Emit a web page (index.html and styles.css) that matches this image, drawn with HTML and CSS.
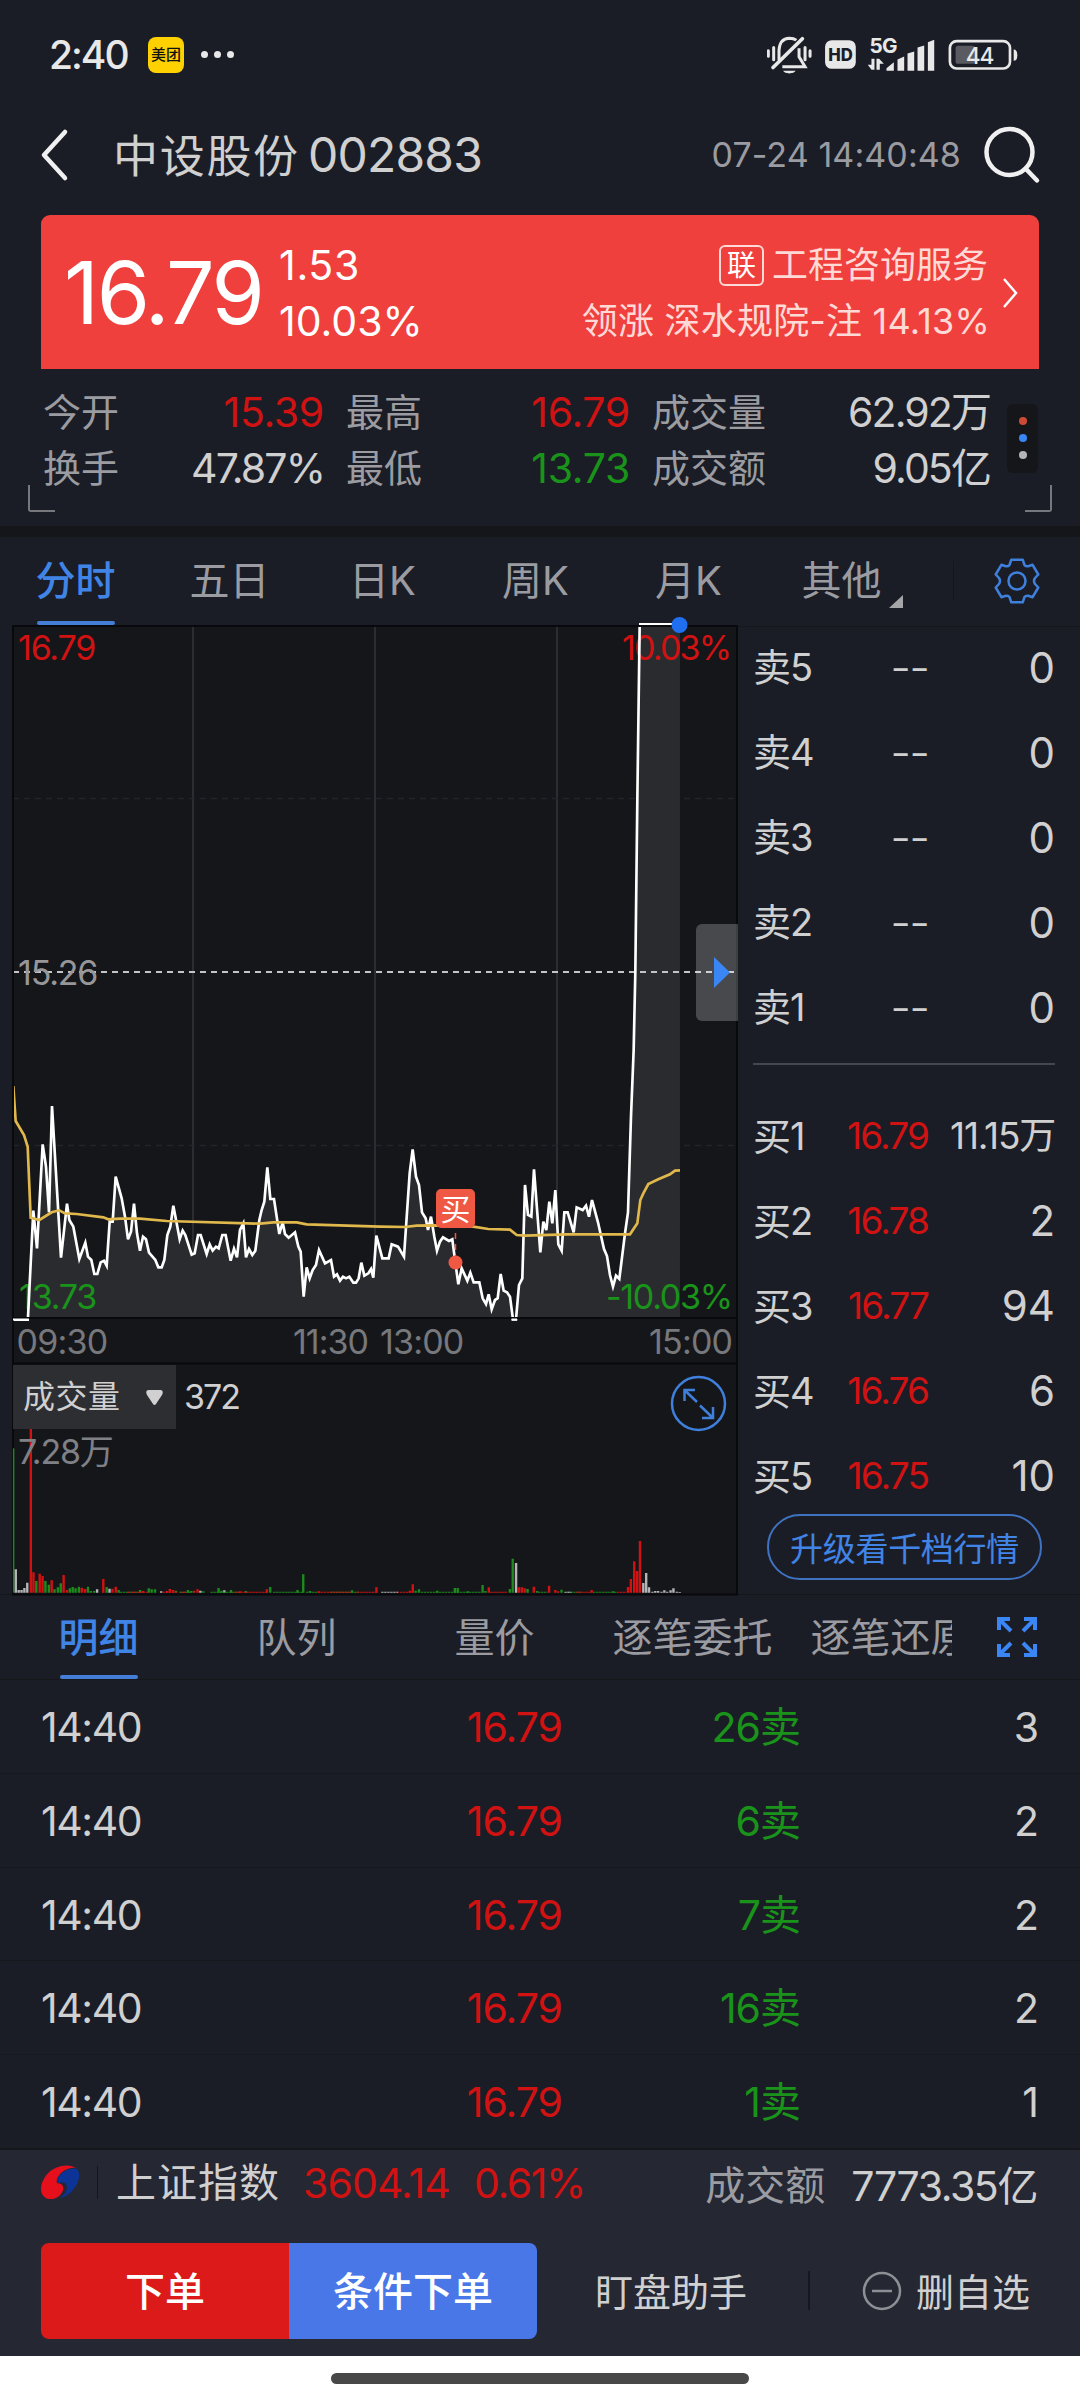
FILE: index.html
```html
<!DOCTYPE html>
<html lang="zh-CN">
<head>
  <meta charset="UTF-8">
  <meta name="viewport" content="width=device-width, initial-scale=1.0">
  <title>中设股份 002883</title>
  <link rel="stylesheet" href="styles.css">
</head>
<body>
  <div class="status-bar">
    <span class="clock">2:40</span>
    <span class="app-badge">美团</span>
    <span class="more"><i></i><i></i><i></i></span>
    <svg class="status-icons" viewBox="80 40 755 125">
      <!-- muted bell -->
      <g fill="none" stroke="#e8e8e8" stroke-width="9">
        <path d="M84 90v16M100 80v37M194 80v37M209 90v16" stroke-linecap="round"/>
        <path d="M116 118V88Q118 53 147 52Q160 52 168 58M176 82V108L194 138H126"/>
        <path d="M98 140L186 54" stroke-width="11" stroke-linecap="round"/>
        <path d="M128 150a20 11 0 0 0 38 0z" fill="#e8e8e8" stroke="none"/>
      </g>
      <rect x="254" y="58" width="92" height="86" rx="20" fill="#e8e8e8"/>
      <text class="hd" x="300" y="119" text-anchor="middle">HD</text>
      <text class="g5" x="387" y="98">5G</text>
      <g fill="#e8e8e8">
        <path d="M393 114h9v33h-9l-11-15h11zM408 147v-33h8l14 15h-12v18z"/>
        <path d="M438 150v-8l22-18v26zM471 150v-34l20-9v43zM501 150V98l20-6v58zM531 150V80l20-6v76zM562 150V64l19-7v93z"/>
        <path d="M819 86q11 0 11 17t-11 17z"/>
      </g>
      <rect x="628" y="61" width="180" height="82" rx="20" fill="none" stroke="#e8e8e8" stroke-width="8"/>
      <rect x="645" y="75" width="58" height="54" rx="8" fill="#5a5b60"/>
      <text class="battery" x="717" y="129" text-anchor="middle">44</text>
    </svg>
  </div>

  <div class="header">
    <svg class="back" width="32" height="56" viewBox="0 0 32 56"><path d="M27 5L6 28L27 51"/></svg>
    <span class="name">中设股份</span>
    <span class="code">002883</span>
    <span class="time">07-24 14:40:48</span>
    <svg class="search" width="58" height="60" viewBox="0 0 58 60"><circle cx="26.5" cy="27" r="23"/><path d="M42.5 43.5L54 55.5"/></svg>
  </div>

  <div class="banner">
    <div class="price">16.79</div>
    <div class="change">
      <div class="diff">1.53</div>
      <div>10.03%</div>
    </div>
    <div class="sector">
      <div class="sector-name"><span class="tag">联</span>工程咨询服务</div>
      <div class="leader">领涨 深水规院-注 14.13%</div>
    </div>
    <svg class="arrow" width="18" height="32" viewBox="0 0 18 32"><path d="M3 2L15 16L3 30"/></svg>
  </div>

  <div class="stats">
    <div class="stats-grid">
      <div><label>今开</label><b class="red">15.39</b></div>
      <div><label>最高</label><b class="red">16.79</b></div>
      <div><label>成交量</label><b>62.92万</b></div>
      <div><label>换手</label><b>47.87%</b></div>
      <div><label>最低</label><b class="green">13.73</b></div>
      <div><label>成交额</label><b>9.05亿</b></div>
    </div>
    <div class="pager"><i></i><i></i><i></i></div>
  </div>

  <div class="tabs">
    <div class="tab active"><span>分时</span></div>
    <div class="tab"><span>五日</span></div>
    <div class="tab"><span>日K</span></div>
    <div class="tab"><span>周K</span></div>
    <div class="tab"><span>月K</span></div>
    <div class="tab other"><span>其他</span></div>
    <div class="tab-tool">
      <svg width="50" height="50" viewBox="-25 -25 50 50">
        <path d="M-5.7-21.3H5.7L7.5-16Q9-14 12-15L15.6-16.2L21.3-6.5L18-3Q16 0 18 3L21.3 6.5L15.6 16.2L12 15Q9 14 7.5 16L5.7 21.3H-5.7L-7.5 16Q-9 14-12 15L-15.6 16.2L-21.3 6.5L-18 3Q-16 0-18-3L-21.3-6.5L-15.6-16.2L-12-15Q-9-14-7.5-16Z"/>
        <circle r="8.5"/>
      </svg>
    </div>
  </div>

  <div class="main">
    <svg class="chart" viewBox="12 626 726 969">
      <rect x="12" y="626" width="726" height="969" fill="#15161a"/>
      <path d="M193 626V1317M375 626V1317M557 626V1317" stroke="#2c2d33" stroke-width="2"/>
      <path d="M13 798.5H738M13 1145.5H738" stroke="#23242a" stroke-width="1.5" stroke-dasharray="6 5"/>

      <!-- intraday price, area + line -->
      <g transform="translate(0 1050) scale(.33333)">
        <path fill="#2a2b2f" d="M84 801L100 482 111 595 128 283 138 350 147 487 156 168 168 370 183 623 201 461 208 510 220 530 238 627 256 578 264 620 274 630 283 672 292 672 302 637 312 632 320 647 329 515 338 515 347 380 365 445 375 500 384 568 393 545 402 461 411 550 420 602 429 560 438 568 447 608 466 630 475 652 485 652 493 630 502 555 511 530 520 467 530 520 539 568 548 542 556 555 575 614 584 610 594 555 602 555 620 612 629 583 638 602 648 590 656 595 667 555 677 555 692 632 702 596 711 622 720 540 730 520 738 622 747 597 757 615 766 602 778 510 785 480 793 455 802 352 811 447 822 447 838 552 848 517 855 552 866 563 885 547 895 590 902 605 911 740 920 652 929 685 938 660 948 645 957 600 975 640 993 630 1002 680 1011 673 1020 692 1029 680 1038 685 1048 680 1060 698 1068 698 1076 685 1084 638 1093 677 1105 670 1113 657 1120 683 1129 557 1147 625 1166 625 1175 583 1194 590 1212 620 1229 370 1238 298 1248 380 1257 405 1266 487 1277 505 1284 540 1293 500 1303 560 1311 602 1320 575 1329 562 1347 573 1357 568 1366 637 1375 703 1385 655 1402 692 1411 668 1421 697 1438 697 1448 745 1458 762 1466 733 1475 778 1485 750 1493 745 1502 672 1511 722 1521 727 1530 740 1539 801 1548 801 1557 705 1567 685 1575 405 1584 495 1594 500 1602 358 1621 607 1630 515 1639 540 1648 455 1657 520 1666 420 1675 583 1685 602 1693 487 1703 487 1721 547 1730 472 1748 480 1758 467 1767 500 1776 450 1794 517 1812 597 1821 618 1830 675 1839 710 1848 677 1858 687 1875 550 1884 487 1893 200 1901 0 1906-234 1912-750 1919-1272H2040V801Z"/>
      </g>

      <path d="M13 972H738" stroke="#c4c4c6" stroke-width="1.8" stroke-dasharray="6 5"/>

      <g class="axis-text">
        <text class="t-red" x="18" y="660" letter-spacing="-1.2">16.79</text>
        <text class="t-red" x="622" y="660" letter-spacing="-1.8">10.03%</text>
        <text x="18" y="984.5" letter-spacing="-1.2">15.26</text>
        <text class="t-green" x="19" y="1309" letter-spacing="-1.2">13.73</text>
        <text class="t-green" x="606" y="1309" letter-spacing="-1.3">-10.03%</text>
        <text class="t-dim" x="16.5" y="1353.5" letter-spacing="-.8">09:30</text>
        <text class="t-dim" x="293" y="1353.5" letter-spacing="-1">11:30</text>
        <text class="t-dim" x="380" y="1353.5" letter-spacing="-.8">13:00</text>
        <text class="t-dim" x="649" y="1353.5" letter-spacing="-.8">15:00</text>
      </g>

      <g transform="translate(0 1050) scale(.33333)" fill="none" stroke-width="8">
        <path stroke="#fff" d="M38 809H87M84 801L100 482 111 595 128 283 138 350 147 487 156 168 168 370 183 623 201 461 208 510 220 530 238 627 256 578 264 620 274 630 283 672 292 672 302 637 312 632 320 647 329 515 338 515 347 380 365 445 375 500 384 568 393 545 402 461 411 550 420 602 429 560 438 568 447 608 466 630 475 652 485 652 493 630 502 555 511 530 520 467 530 520 539 568 548 542 556 555 575 614 584 610 594 555 602 555 620 612 629 583 638 602 648 590 656 595 667 555 677 555 692 632 702 596 711 622 720 540 730 520 738 622 747 597 757 615 766 602 778 510 785 480 793 455 802 352 811 447 822 447 838 552 848 517 855 552 866 563 885 547 895 590 902 605 911 740 920 652 929 685 938 660 948 645 957 600 975 640 993 630 1002 680 1011 673 1020 692 1029 680 1038 685 1048 680 1060 698 1068 698 1076 685 1084 638 1093 677 1105 670 1113 657 1120 683 1129 557 1147 625 1166 625 1175 583 1194 590 1212 620 1229 370 1238 298 1248 380 1257 405 1266 487 1277 505 1284 540 1293 500 1303 560 1311 602 1320 575 1329 562 1347 573 1357 568 1366 637 1375 703 1385 655 1402 692 1411 668 1421 697 1438 697 1448 745 1458 762 1466 733 1475 778 1485 750 1493 745 1502 672 1511 722 1521 727 1530 740 1539 808 1548 808 1557 705 1567 685 1575 405 1584 495 1594 500 1602 358 1621 607 1630 515 1639 540 1648 455 1657 520 1666 420 1675 583 1685 602 1693 487 1703 487 1721 547 1730 472 1748 480 1758 467 1767 500 1776 450 1794 517 1812 597 1821 618 1830 675 1839 710 1848 677 1858 687 1875 550 1884 487 1893 200 1901 0 1906-234 1912-750 1919-1272"/>
        <path stroke="#e0b84c" d="M40 108L47 213 72 255 83 290 92 503 118 510 155 487 178 481 195 490 230 492 310 502 325 508 360 506 420 506 500 513 780 521 820 517 890 517 920 523 1140 530 1215 531 1250 527 1300 526 1420 530 1465 537 1530 539 1550 555 1575 557 1700 553 1890 553 1912 520 1921 450 1930 430 1945 402 1975 388 2010 373 2025 362 2040 361"/>
      </g>

      <path d="M13 1594.5V626H737V1594.5Z" fill="none" stroke="#08090c" stroke-width="2"/>
      <path d="M12 1318H738M12 1363.5H738" stroke="#08090c" stroke-width="2"/>
      <path d="M639 624H676M13 1319.5H29M511.5 1319.5H517" stroke="#fff" stroke-width="2"/>
      <circle cx="679.5" cy="625" r="8" fill="#1f6ff0"/>

      <path d="M455.5 1233V1256" stroke="#ef5842" stroke-width="1.5" stroke-dasharray="6 5"/>
      <circle cx="455.5" cy="1262.5" r="7" fill="#ef5842"/>
      <rect x="436" y="1189" width="39" height="39" rx="5" fill="#ef5842"/>
      <text class="flag" x="455.5" y="1220" text-anchor="middle">买</text>

      <path d="M738 924H702a6 6 0 0 0-6 6v85a6 6 0 0 0 6 6h36z" fill="#fff" fill-opacity=".22"/>
      <path d="M714 957L730 972.5L714 988Z" fill="#3b86f5"/>

      <!-- volume bars -->
      <g transform="translate(0 1360) scale(.4783 .33333)" stroke-width="5" fill="none">
        <path stroke="#1d8a1d" d="M76 698V663M95 698V663M102 698V674M114 698V688M121 698V682M127 698V670M146 698V685M152 698V681M158 698V685M165 698V680M184 698V680M190 698V693M197 698V693M223 698V681M248 698V690M293 698V690M311 698V685M317 698V688M324 698V688M368 698V692M393 698V690M400 698V693M425 698V694M457 698V684M463 698V692M483 698V690M514 698V693M565 698V681M622 698V690M634 698V643M648 698V693M736 698V691M869 698V692M876 698V688M914 698V692M951 698V684M957 698V684M978 698V694M1009 698V675M1015 698V693M1066 698V687M1072 698V596M1103 698V687M1123 698V693M1174 698V689M1282 698V694"/>
        <path stroke="#1d8a1d" stroke-width="3" d="M28.5 698V265"/>
        <path stroke="#d01212" d="M64.5 698V200M70 698V637M83 698V641M89 698V648M108 698V661M133 698V645M140 698V690M171 698V683M178 698V687M216 698V657M235 698V686M242 698V680M299 698V693M349 698V693M355 698V687M362 698V690M406 698V692M413 698V688M502 698V694M558 698V688M667 698V694M787 698V682M857 698V692M863 698V673M1022 698V682M1085 698V682M1091 698V682M1097 698V685M1116 698V680M1148 698V677M1161 698V690M1167 698V694M1237 698V690M1313 698V681M1319 698V657M1326 698V604M1332 698V633M1338 698V543"/>
        <path stroke="#b5b5b7" d="M33 698V628M39 698V690M45 698V690M51 698V684M57 698V668M203 698V688M229 698V686M337 698V694M419 698V692M469 698V691M1079 698V609M1345 698V669M1351 698V639M1357 698V682M1364 698V695M1370 698V693M1376 698V693M1383 698V695M1389 698V691M1395 698V695M1402 698V691M1408 698V685M1415 698V695M1421 698V696"/>
        <g stroke-width="3" stroke-dasharray="5 1.3">
          <path stroke="#1d8a1d" d="M250 697H290M375 697H400M440 697H500M571 697H635M640 697H665M690 697H750M880 697H1005M1125 697H1145M1186 697H1215M1240 697H1290"/>
          <path stroke="#d01212" d="M267 697H310M340 697H370M378 697H390M490 697H560M665 697H735M745 697H790M830 697H860M1025 697H1060M1205 697H1235M1290 697H1310"/>
          <path stroke="#b5b5b7" d="M797 697H832M1180 697H1195"/>
        </g>
      </g>
      <rect x="13" y="1365" width="163" height="64" fill="#2d2e32"/>
      <text class="vol-name" x="23" y="1408" letter-spacing=".5">成交量</text>
      <path d="M148 1390h13q3 1 1 5l-6 9q-1.5 2-3 0l-6-9q-2-4 1-5z" fill="#d0d0d0"/>
      <text class="vol-value" x="184" y="1409" letter-spacing="-2">372</text>
      <text class="vol-max" x="18" y="1464" letter-spacing="-1.2">7.28万</text>
      <g fill="none" stroke="#3f80dc" stroke-width="2.5">
        <circle cx="698.5" cy="1403.5" r="26.5"/>
        <path d="M684.5 1401V1390H695M685 1390.5L697 1402M700 1405.5L712.5 1417.5M713 1407V1418H702"/>
      </g>
    </svg>

    <div class="book">
      <div class="asks">
        <div class="level"><span>卖5</span><em>--</em><b>0</b></div>
        <div class="level"><span>卖4</span><em>--</em><b>0</b></div>
        <div class="level"><span>卖3</span><em>--</em><b>0</b></div>
        <div class="level"><span>卖2</span><em>--</em><b>0</b></div>
        <div class="level"><span>卖1</span><em>--</em><b>0</b></div>
      </div>
      <div class="bids">
        <div class="level"><span>买1</span><em class="red">16.79</em><b class="small">11.15万</b></div>
        <div class="level"><span>买2</span><em class="red">16.78</em><b>2</b></div>
        <div class="level"><span>买3</span><em class="red">16.77</em><b>94</b></div>
        <div class="level"><span>买4</span><em class="red">16.76</em><b>6</b></div>
        <div class="level"><span>买5</span><em class="red">16.75</em><b>10</b></div>
      </div>
      <button class="upgrade">升级看千档行情</button>
    </div>
  </div>

  <div class="detail-tabs">
    <div class="detail-scroll">
      <div class="tab active"><span>明细</span></div>
      <div class="tab"><span>队列</span></div>
      <div class="tab"><span>量价</span></div>
      <div class="tab"><span>逐笔委托</span></div>
      <div class="tab"><span>逐笔还原</span></div>
    </div>
    <svg class="expand" width="40" height="40" viewBox="0 0 40 40">
      <path d="M2 13V2H13M3 3L14 14M27 2H38V13M37 3L26 14M2 27V38H13M3 37L14 26M38 27V38H27M37 37L26 26"/>
    </svg>
  </div>

  <div class="trades">
    <div class="trade"><span>14:40</span><span class="red">16.79</span><span class="green">26卖</span><span>3</span></div>
    <div class="trade"><span>14:40</span><span class="red">16.79</span><span class="green">6卖</span><span>2</span></div>
    <div class="trade"><span>14:40</span><span class="red">16.79</span><span class="green">7卖</span><span>2</span></div>
    <div class="trade"><span>14:40</span><span class="red">16.79</span><span class="green">16卖</span><span>2</span></div>
    <div class="trade"><span>14:40</span><span class="red">16.79</span><span class="green">1卖</span><span>1</span></div>
  </div>

  <div class="footer">
    <div class="index-row">
      <svg class="logo" width="40" height="38" viewBox="0 0 120 114">
        <path fill="#e60f1c" d="M108 12C90-2 45 2 20 32C-2 58-4 94 22 104C46 110 68 92 70 74C70 62 62 58 52 58C46 50 54 32 72 20C84 13 98 10 108 12Z"/>
        <path fill="#0c3396" d="M110 14C122 24 120 52 102 74C88 92 70 101 58 102C76 92 86 76 78 60C72 52 60 58 52 56C48 44 60 28 76 20C88 14 100 12 110 14Z"/>
      </svg>
      <span class="index-name">上证指数</span>
      <span class="index-value red">3604.14</span>
      <span class="index-pct red">0.61%</span>
      <span class="amount-label">成交额</span>
      <span class="amount">7773.35亿</span>
    </div>
    <div class="action-row">
      <button class="order">下单</button>
      <button class="order cond">条件下单</button>
      <span class="helper">盯盘助手</span>
      <span class="remove">
        <svg width="40" height="40" viewBox="0 0 40 40"><circle cx="20" cy="20" r="18"/><path d="M10 20H30"/></svg>
        <span>删自选</span>
      </span>
    </div>
  </div>
  <div class="home-bar"><i></i></div>
</body>
</html>
```
FILE: styles.css
```css
* {
  box-sizing: border-box;
}

body {
  margin: 0;
  width: 1080px;
  height: 2400px;
  overflow: hidden;
  background-color: #1b1d26;
  color: #d0d0d0;
  font-family: Inter, "Noto Sans CJK SC", sans-serif;
  font-size: 41px;
  white-space: nowrap;
}

b, em, i {
  font-weight: 400;
  font-style: normal;
}

button {
  font-family: inherit;
  border: none;
  padding: 0;
}

.red { color: #d01212; }
.green { color: #1a931a; }

/* status bar */
.status-bar {
  display: flex;
  align-items: center;
  height: 109px;
  padding: 0 61px 0 49px;
}

.clock {
  width: 99px;
  font-size: 39px;
  font-weight: 500;
  letter-spacing: -2px;
  color: #e8e8e8;
}

.app-badge {
  width: 36px;
  height: 36px;
  line-height: 35px;
  border-radius: 8px;
  background-color: #ffd100;
  color: #111;
  font-size: 15px;
  font-weight: 500;
  text-align: center;
}

.more {
  display: flex;
  gap: 6px;
  margin-left: 17px;
}

.more i {
  width: 7px;
  height: 7px;
  border-radius: 50%;
  background-color: #e8e8e8;
}

.status-icons {
  width: 252px;
  height: 42px;
  margin-left: auto;
  font-weight: 700;
}

.hd { font-size: 50px; font-weight: 800; fill: #1b1d26; }
.g5 { font-size: 62px; font-weight: 700; letter-spacing: -2px; fill: #e8e8e8; }
.battery { font-size: 68px; font-weight: 500; letter-spacing: -3px; fill: #e8e8e8; }

/* header */
.header {
  display: flex;
  align-items: center;
  height: 91px;
  padding: 0 39px 0 38px;
}

.back, .search {
  fill: none;
  stroke: #f0f0f0;
  stroke-width: 4.5;
  stroke-linecap: round;
  stroke-linejoin: round;
}

.search {
  margin-left: 22px;
}

.name {
  margin-left: 43px;
  width: 195px;
  padding-bottom: 2px;
  font-size: 45px;
  letter-spacing: 1.7px;
}

.code {
  font-size: 48px;
  letter-spacing: -0.8px;
}

.time {
  margin-left: auto;
  font-size: 34px;
  letter-spacing: 0.1px;
  color: #9b9ca1;
}

/* price banner */
.banner {
  display: flex;
  align-items: center;
  height: 154px;
  margin: 15px 41px 0 41px;
  padding: 2px 20px 0 23px;
  border-radius: 9px 9px 0 0;
  background-color: #ef403e;
  color: #fff;
}

.price {
  width: 215px;
  font-size: 86px;
  font-weight: 400;
  letter-spacing: -2.3px;
  line-height: 100px;
}

.change {
  line-height: 56px;
}

.diff {
  letter-spacing: 0.7px;
}

.sector {
  margin-left: auto;
  line-height: 56px;
  font-size: 36px;
  text-align: right;
  color: #ffd9d6;
}

.sector-name {
  display: flex;
  align-items: center;
  justify-content: flex-end;
  height: 55px;
  margin-right: 2px;
}

.leader {
  letter-spacing: 0.2px;
}

.tag {
  width: 45px;
  height: 41px;
  line-height: 37px;
  margin-right: 8px;
  border: 2px solid #ffd9d6;
  border-radius: 6px;
  color: #fff;
  font-size: 29px;
  text-align: center;
}

.arrow {
  margin-left: 11px;
  fill: none;
  stroke: #fff;
  stroke-width: 2.5;
}

/* today's figures */
.stats {
  position: relative;
  display: flex;
  align-items: center;
  height: 157px;
  padding: 0 42px 16px 43px;
}

.stats-grid {
  display: grid;
  grid-template-columns: 281px 284px 338px;
  column-gap: 22px;
  line-height: 56px;
}

.stats-grid div {
  display: flex;
  justify-content: space-between;
}

.stats label {
  font-size: 38px;
  color: #9b9ca1;
}

.stats b {
  letter-spacing: -1.9px;
}

.stats .red, .stats .green {
  letter-spacing: -0.3px;
}

.stats::before, .stats::after {
  content: "";
  position: absolute;
  bottom: 14px;
  left: 28px;
  width: 25px;
  height: 25px;
  border: solid #77787d;
  border-width: 0 0 2px 2px;
  border-radius: 0 0 0 3px;
}

.stats::after {
  left: auto;
  right: 28px;
  border-width: 0 2px 2px 0;
  border-radius: 0 0 3px 0;
}

.pager {
  display: flex;
  flex-direction: column;
  align-items: center;
  justify-content: center;
  gap: 9px;
  width: 31px;
  height: 69px;
  margin: 0 0 3px auto;
  border-radius: 6px;
  background-color: #15161a;
}

.pager i {
  width: 8px;
  height: 8px;
  border-radius: 50%;
  background-color: #b5b5b7;
}

.pager i:nth-child(1) { background-color: #cf4a35; }
.pager i:nth-child(2) { background-color: #3b86f5; }

/* tabs */
.tabs {
  display: flex;
  height: 100px;
  border-top: 11px solid #15161a;
}

.tab {
  display: flex;
  justify-content: center;
  flex: 0 0 153px;
  height: 100%;
  line-height: 87px;
  font-size: 40px;
  color: #9b9ca1;
}

.tab.active span {
  position: relative;
  height: 88px;
  font-weight: 500;
  color: #4084e6;
}

.tab.active span::after {
  content: "";
  position: absolute;
  left: 1px;
  right: 1px;
  bottom: 0;
  height: 4px;
  border-radius: 2px;
  background-color: #447ed6;
}

.tabs .active {
  padding-right: 2px;
}

.other {
  position: relative;
}

.other::after {
  content: "";
  position: absolute;
  left: 124px;
  top: 58px;
  border: solid transparent;
  border-width: 0 0 13px 14px;
  border-bottom-color: #a5a5a8;
}

.tab-tool {
  display: flex;
  align-items: center;
  justify-content: center;
  flex: 1;
  height: 40px;
  margin: 24px 0 0 35px;
  border-left: 1px solid #15161a;
}

.tab-tool svg {
  fill: none;
  stroke: #3f80dc;
  stroke-width: 2.5;
  stroke-linejoin: round;
}

/* chart + order book */
.main {
  display: flex;
  height: 969px;
  padding-left: 12px;
  border-bottom: 1px solid #15161a;
}

.chart {
  flex: none;
  width: 726px;
  height: 969px;
  overflow: visible;
}

.axis-text {
  font-size: 34px;
  fill: #97979a;
}

.t-red { fill: #d01212; }
.t-green { fill: #1a931a; }
.t-dim { fill: #77787c; }
.flag { font-size: 30px; fill: #fff; }
.vol-name { font-size: 32px; fill: #d0d0d0; }
.vol-value { font-size: 34px; fill: #d0d0d0; }
.vol-max { font-size: 34px; fill: #808186; }

.book {
  flex: 1;
  padding: 0 25px 0 15px;
  border-top: 1px solid #15161a;
}

.asks {
  height: 438px;
  border-bottom: 2px solid #45474f;
}

.bids {
  padding-top: 30px;
}

.level {
  display: grid;
  grid-template-columns: 72px 1fr 127px;
  height: 85px;
  line-height: 82px;
}

.level span {
  font-size: 38px;
  letter-spacing: -1px;
}

.level em {
  font-size: 37px;
  letter-spacing: -1.9px;
  text-align: right;
}

.asks .level {
  line-height: 81px;
}

.asks em {
  font-size: 46px;
  font-weight: 300;
  letter-spacing: -2px;
}

.level b {
  font-size: 42px;
  text-align: right;
}

.level b.small {
  font-size: 37px;
  letter-spacing: -1.2px;
}

.upgrade {
  display: block;
  width: 275px;
  height: 66px;
  margin: -6px auto 0 14px;
  border: 2px solid #3f72c0;
  border-radius: 33px;
  background: none;
  color: #4084e6;
  font-size: 33px;
  letter-spacing: -0.3px;
}

/* trade details */
.detail-tabs {
  display: flex;
  align-items: center;
  height: 85px;
  border-bottom: 1px solid #15161a;
}

.detail-scroll {
  display: flex;
  width: 952px;
  height: 84px;
  overflow: hidden;
}

.detail-scroll .tab {
  flex-basis: 198px;
  padding-right: 1px;
  line-height: 86px;
}

.detail-scroll .active span {
  height: 84px;
}

.expand {
  margin-left: 45px;
  fill: none;
  stroke: #3b86f5;
  stroke-width: 4;
}

.trade {
  display: grid;
  grid-template-columns: 200px 321px 238px 1fr;
  height: 93.8px;
  padding: 0 42px 0 41px;
  line-height: 94px;
  border-bottom: 1px solid #17181d;
  letter-spacing: -1px;
  text-align: right;
}

.trade span:first-child {
  text-align: left;
  letter-spacing: -1.4px;
}

/* bottom panel */
.footer {
  height: 207px;
  background-color: #252733;
  border-top: 1px solid #15161a;
}

.index-row {
  display: flex;
  align-items: center;
  height: 66px;
  padding: 0 43px 0 40px;
}

.index-name {
  margin-left: 17px;
  padding-left: 18px;
  border-left: 1px solid #15161a;
  width: 206px;
  line-height: 33px;
  font-size: 40px;
  letter-spacing: 1px;
}

.index-value {
  width: 171px;
  letter-spacing: -0.9px;
}

.index-pct {
  letter-spacing: -1.4px;
}

.amount-label {
  margin-left: auto;
  font-size: 40px;
  color: #9b9ca1;
}

.amount {
  margin-left: 26px;
  letter-spacing: -1.4px;
}

.action-row {
  display: flex;
  align-items: center;
  height: 96px;
  margin-top: 27px;
  padding: 0 50px 0 41px;
  font-size: 38px;
}

.order {
  width: 248px;
  height: 96px;
  padding-bottom: 3px;
  border-radius: 8px 0 0 8px;
  background-color: #dc1a1a;
  color: #fff;
  font-size: 40px;
  font-weight: 500;
}

.cond {
  border-radius: 0 8px 8px 0;
  background-color: #4a77e8;
}

.helper {
  margin-left: 58px;
  padding-bottom: 3px;
}

.remove {
  display: flex;
  align-items: center;
  gap: 14px;
  margin-left: auto;
  height: 39px;
  padding-left: 52px;
  border-left: 2px solid #17181f;
}

.remove span {
  padding-bottom: 3px;
}

.remove svg {
  fill: none;
  stroke: #8e8f95;
  stroke-width: 2.5;
}

.home-bar {
  display: flex;
  justify-content: center;
  height: 44px;
  padding-top: 17px;
  background-color: #fff;
}

.home-bar i {
  width: 418px;
  height: 11px;
  border-radius: 6px;
  background-color: #484848;
}
```
